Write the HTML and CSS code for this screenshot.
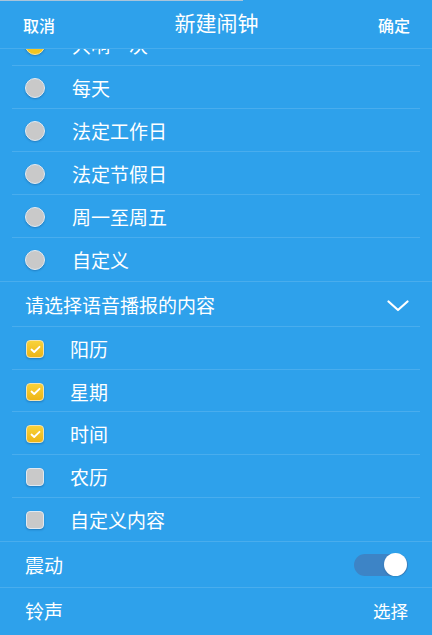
FILE: index.html
```html
<!DOCTYPE html>
<html lang="zh">
<head>
<meta charset="utf-8">
<link rel="stylesheet" href="styles.css">
</head>
<body>
<div class="app">
  <div class="topline"></div>
  <header class="bar">
    <span class="bar-btn">取消</span>
    <span class="bar-title">新建闹钟</span>
    <span class="bar-btn right">确定</span>
  </header>
  <div class="viewport">
    <div class="list">
      <div class="row inset"><span class="radio on"></span><span class="label">只响一次</span></div>
      <div class="row inset"><span class="radio"></span><span class="label">每天</span></div>
      <div class="row inset"><span class="radio"></span><span class="label">法定工作日</span></div>
      <div class="row inset"><span class="radio"></span><span class="label">法定节假日</span></div>
      <div class="row inset"><span class="radio"></span><span class="label">周一至周五</span></div>
      <div class="row full"><span class="radio"></span><span class="label">自定义</span></div>

      <div class="section inset">
        <span class="section-title">请选择语音播报的内容</span>
        <svg class="chevron" width="22" height="12" viewBox="0 0 22 12"><polyline points="1.5,1.5 11,10 20.5,1.5" fill="none" stroke="#fff" stroke-width="2.2" stroke-linecap="round" stroke-linejoin="round"/></svg>
      </div>

      <div class="row inset"><span class="check on"><svg width="11" height="9" viewBox="0 0 11 9"><polyline points="1.5,4.5 4.2,7 9.5,1.8" fill="none" stroke="#fff" stroke-width="1.8" stroke-linecap="round" stroke-linejoin="round"/></svg></span><span class="label">阳历</span></div>
      <div class="row inset short"><span class="check on"><svg width="11" height="9" viewBox="0 0 11 9"><polyline points="1.5,4.5 4.2,7 9.5,1.8" fill="none" stroke="#fff" stroke-width="1.8" stroke-linecap="round" stroke-linejoin="round"/></svg></span><span class="label">星期</span></div>
      <div class="row inset"><span class="check on"><svg width="11" height="9" viewBox="0 0 11 9"><polyline points="1.5,4.5 4.2,7 9.5,1.8" fill="none" stroke="#fff" stroke-width="1.8" stroke-linecap="round" stroke-linejoin="round"/></svg></span><span class="label">时间</span></div>
      <div class="row inset"><span class="check"></span><span class="label">农历</span></div>
      <div class="row full"><span class="check"></span><span class="label">自定义内容</span></div>

      <div class="setting full">
        <span class="setting-label">震动</span>
        <span class="toggle"><span class="knob"></span></span>
      </div>
      <div class="setting">
        <span class="setting-label">铃声</span>
        <span class="setting-value">选择</span>
      </div>
    </div>
  </div>
</div>
</body>
</html>
```

FILE: styles.css
```css
* { box-sizing: border-box; }
html, body {
  margin: 0;
  padding: 0;
  background: #2ea1eb;
}
body {
  width: 432px;
  height: 635px;
  overflow: hidden;
  font-family: "Noto Sans CJK SC", "Noto Sans", sans-serif;
  color: #fff;
}
.app {
  display: flex;
  flex-direction: column;
  height: 635px;
}
.topline {
  width: 243px;
  height: 1px;
  background: #a9c4da;
  flex: none;
}
.bar {
  flex: none;
  height: 48px;
  display: grid;
  grid-template-columns: 1fr auto 1fr;
  align-items: center;
  padding: 0 22px 0 23px;
  border-bottom: 1px solid rgba(255, 255, 255, 0.12);
  position: relative;
  z-index: 1;
  background: #2ea1eb;
}
.bar-btn {
  font-size: 16px;
  line-height: 20px;
  padding-top: 1px;
  font-weight: 500;
}
.bar-btn.right { justify-self: end; }
.bar-title {
  font-size: 21px;
  line-height: 24px;
  margin-bottom: 5px;
}
.viewport {
  flex: 1;
  overflow: hidden;
}
.list {
  margin-top: -25px;
}
.row {
  height: 43px;
  display: flex;
  align-items: center;
  padding-left: 25px;
}
.row.short {
  height: 42px;
}
.inset {
  border-bottom: 1px solid transparent;
  background-image: linear-gradient(rgba(255,255,255,0.13), rgba(255,255,255,0.13));
  background-size: 408px 1px;
  background-position: 12px 100%;
  background-repeat: no-repeat;
}
.full {
  border-bottom: 1px solid rgba(255, 255, 255, 0.13);
}
.label {
  font-size: 19px;
  line-height: 24px;
  margin-left: 27px;
}
.radio {
  width: 20px;
  height: 20px;
  border-radius: 50%;
  background: #c9c9c9;
  border: 1.5px solid #e2ebf3;
  box-shadow: 0 1px 2px rgba(0, 40, 90, 0.3);
  flex: none;
}
.radio.on {
  background: #f3c521;
  border-color: #f6e6a0;
}
.check {
  width: 18px;
  height: 18px;
  border-radius: 4px;
  background: #c9c9c9;
  border: 1.5px solid #dfe9f2;
  box-shadow: 0 1px 2px rgba(0, 40, 90, 0.3);
  flex: none;
  display: flex;
  align-items: center;
  justify-content: center;
  margin-left: 1px;
  margin-right: -1px;
}
.check.on {
  background: linear-gradient(#f8d23a, #eeb516);
  border-color: #f3e3b0;
}
.section {
  height: 46px;
  display: flex;
  align-items: center;
  justify-content: space-between;
  padding: 0 23px 0 25px;
}
.section-title {
  font-size: 19px;
  line-height: 24px;
  margin-top: 1px;
}
.chevron {
  display: block;
  margin-top: 2px;
}
.setting {
  height: 46px;
  display: flex;
  align-items: center;
  justify-content: space-between;
  padding: 0 24px 0 25px;
}
.setting-label {
  font-size: 19px;
  line-height: 24px;
}
.setting-value {
  font-size: 17.5px;
  line-height: 24px;
}
.toggle {
  width: 54px;
  height: 22px;
  border-radius: 11px;
  background: #3d84c6;
  display: flex;
  align-items: center;
  justify-content: flex-end;
  padding-right: 1px;
}
.knob {
  width: 23px;
  height: 23px;
  border-radius: 50%;
  background: #fff;
  box-shadow: 0 1px 2px rgba(0, 0, 0, 0.15);
}
```
